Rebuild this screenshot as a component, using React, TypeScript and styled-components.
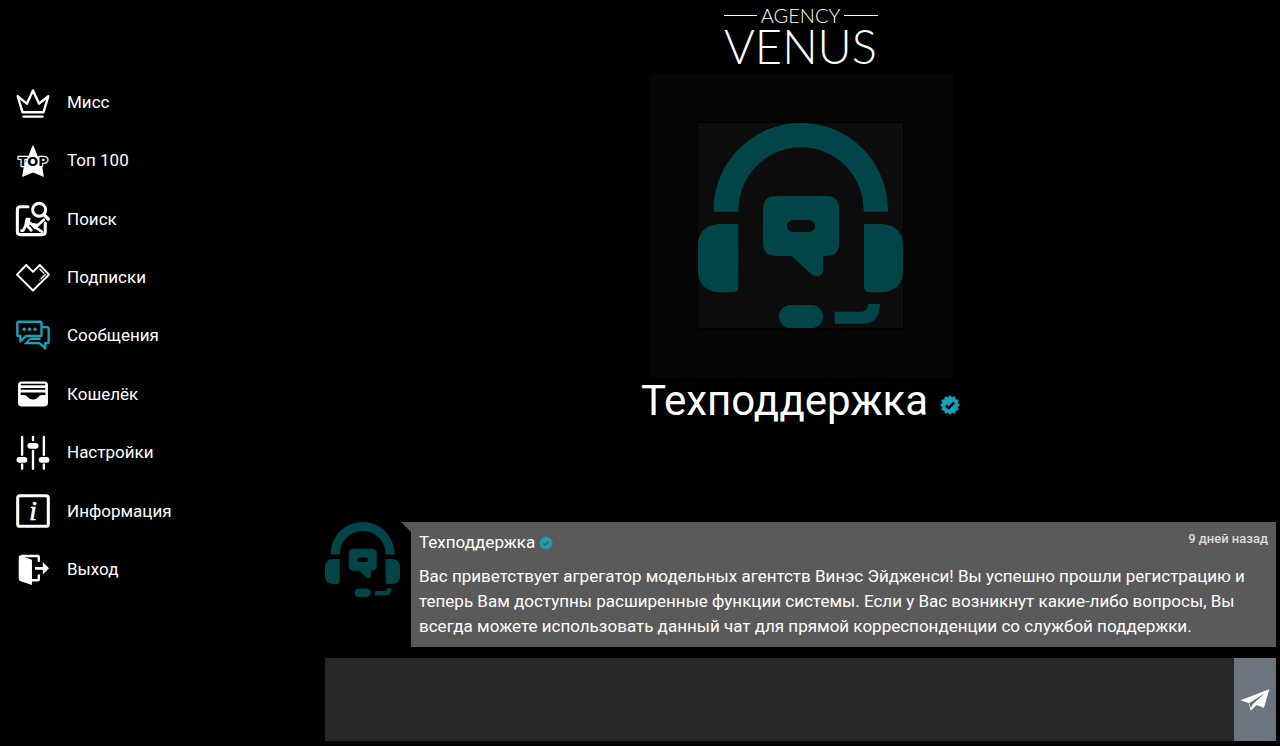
import React from "react";
import styled, { createGlobalStyle } from "styled-components";

const teal = "#17a2b8";
const deepTeal = "#024549";

const GlobalStyle = createGlobalStyle`
  *, *::before, *::after { box-sizing: border-box; }
  body {
    margin: 0;
    background: #000;
    color: #fff;
    font-family: Roboto, "Liberation Sans", sans-serif;
    font-size: 17px;
    line-height: 25px;
  }
`;

const Page = styled.div`
  display: grid;
  grid-template-columns: 1fr 3fr;
  min-height: 100vh;
`;

const Sidebar = styled.nav`
  padding: 73px 16px 0;
`;

const Menu = styled.ul`
  display: grid;
  grid-auto-rows: 1fr;
  min-height: 526px;
  margin: 0;
  padding: 0;
  list-style: none;
`;

const MenuLink = styled.a<{ $active?: boolean }>`
  display: flex;
  align-items: center;
  gap: 17px;
  height: 100%;
  color: #fff;
  text-decoration: none;

  svg {
    flex: none;
    width: 34px;
    height: 34px;
    overflow: visible;
    color: ${(p) => (p.$active ? teal : "#fff")};
  }
`;

const Main = styled.main`
  display: flex;
  flex-direction: column;
  padding: 0 4px 5px 5px;
`;

const Logo = styled.a`
  display: flex;
  flex-direction: column;
  align-self: center;
  align-items: center;
  height: 73px;
  padding-top: 7px;
  color: #fff;
  font-family: Lato, "Liberation Sans", sans-serif;
  font-weight: 300;
  text-decoration: none;
`;

const LogoTop = styled.span`
  display: flex;
  align-items: center;
  gap: 4px;
  width: 154px;
  font-size: 20px;
  line-height: 16px;

  &::before,
  &::after {
    content: "";
    flex: 1;
    height: 1px;
    background: #fff;
  }
`;

const LogoName = styled.span`
  font-size: 47px;
  line-height: 46px;
`;

const Hero = styled.header`
  display: flex;
  flex-direction: column;
  align-items: center;
`;

const Portrait = styled.div`
  display: grid;
  place-items: center;
  width: 304px;
  height: 304px;
  background: #050505;
`;

const PortraitInner = styled.div`
  display: flex;
  border: 1px solid #000;
  background: #0c0c0c;
`;

const Title = styled.h1`
  display: flex;
  align-items: center;
  gap: 12px;
  margin: 0;
  font-size: 42px;
  font-weight: 400;
  line-height: 48px;

  svg { margin-top: 8px; }
`;

const Chat = styled.section`
  display: flex;
  flex-direction: column;
  gap: 11px;
  margin-top: auto;
`;

const Message = styled.article`
  display: flex;
  align-items: flex-start;
`;

const Tail = styled.svg`
  flex: none;
  width: 10px;
  height: 10px;
  margin-left: 1px;
`;

const Bubble = styled.div`
  flex: 1;
  padding: 8px;
  background: #5a5a5a;
`;

const BubbleHead = styled.div`
  display: flex;
  justify-content: space-between;
  margin-bottom: 9px;
`;

const Author = styled.strong`
  display: flex;
  align-items: center;
  gap: 4px;
  font-weight: 400;
`;

const Time = styled.time`
  color: #ddd;
  font-size: 13px;
  font-weight: 500;
  line-height: 18px;
`;

const Text = styled.p`
  margin: 0;
`;

const Composer = styled.form`
  display: flex;
  height: 83px;
`;

const Field = styled.textarea`
  flex: 1;
  padding: 8px;
  border: 0;
  outline: 0;
  background: #282828;
  color: #fff;
  font: inherit;
  resize: none;
`;

const Send = styled.button`
  display: grid;
  place-items: center;
  width: 42px;
  padding: 0;
  border: 0;
  background: #6c757d;
  color: #fff;
`;

const Headset = ({ size }: { size: number }) => (
  <svg width={size} height={size} viewBox="0 0 615 615" fill={deepTeal} aria-hidden="true">
    <path d="M47 266V261C47 117 164 0 309 0S570 117 570 261V266H497V261C497 157 413 73 309 73S122 157 122 261V266Z" />
    <path d="M60 303H121V490Q121 508 103 508H60Q0 500 0 444V367Q0 311 60 303Z" />
    <path d="M498 303H555Q615 311 615 367V444Q615 500 555 508H516Q498 508 498 490Z" />
    <path
      fillRule="evenodd"
      d="M235 219H384Q424 219 424 259V359Q424 399 384 399H376V440C376 458 356 465 342 455L281 399H235Q195 399 195 359V259Q195 219 235 219ZM285 291A18 18 0 0 0 285 327H333A18 18 0 0 0 333 291Z"
    />
    <rect x="243" y="546" width="132" height="69" rx="35" />
    <path d="M410 566H488Q510 566 510 543H546Q546 602 492 602H410Z" />
  </svg>
);

const badgePoints = Array.from({ length: 24 }, (_, i) => {
  const r = i % 2 ? 39 : 49;
  const a = (i * Math.PI) / 12;
  return `${(50 + r * Math.sin(a)).toFixed(1)},${(50 - r * Math.cos(a)).toFixed(1)}`;
}).join(" ");

const Verified = ({ size, check }: { size: number; check: string }) => (
  <svg width={size} height={size} viewBox="0 0 100 100" role="img" aria-label="Подтверждён">
    <polygon points={badgePoints} fill={teal} stroke={teal} strokeWidth="2" strokeLinejoin="round" />
    <path d="M29 52L44 65L70 38" fill="none" stroke={check} strokeWidth="13" />
  </svg>
);

const Icon = ({ children }: { children: React.ReactNode }) => (
  <svg viewBox="0 0 100 100" fill="currentColor" stroke="none" aria-hidden="true">
    {children}
  </svg>
);

const items: { label: string; active?: boolean; icon: React.ReactNode }[] = [
  {
    label: "Мисс",
    icon: (
      <g fill="none" stroke="currentColor" strokeLinejoin="round" strokeLinecap="round">
        <path d="M5 33L32 55L50 16L68 55L95 33L81 80H19Z" strokeWidth="7" />
        <path d="M22 93H78" strokeWidth="7" />
      </g>
    ),
  },
  {
    label: "Топ 100",
    icon: (
      <>
        <path d="M50 2L64 36L76 60L82 97L50 84L18 97L24 60L36 36Z" />
        <text
          x="50"
          y="64"
          textAnchor="middle"
          fontFamily="DejaVu Sans, sans-serif"
          fontWeight="700"
          fontSize="38"
          fill="#000"
          stroke="currentColor"
          strokeWidth="7"
          strokeLinejoin="round"
          paintOrder="stroke"
        >
          TOP
        </text>
      </>
    ),
  },
  {
    label: "Поиск",
    icon: (
      <>
        <path
          d="M35 14H13Q4 14 4 23V87Q4 96 13 96H77Q86 96 86 87V62"
          fill="none"
          stroke="currentColor"
          strokeWidth="9"
          strokeLinecap="round"
        />
        <circle cx="68" cy="23" r="19" fill="none" stroke="currentColor" strokeWidth="9" />
        <path d="M82 37L95 50" stroke="currentColor" strokeWidth="10" strokeLinecap="round" />
        <path
          d="M32 50H39M31 54L28 70L21 84H16M38 56L35 72L45 83M42 62L56 76L82 52M56 74L76 87M48 66L60 67"
          fill="none"
          stroke="currentColor"
          strokeWidth="8"
          strokeLinejoin="round"
          strokeLinecap="round"
        />
      </>
    ),
  },
  {
    label: "Подписки",
    icon: (
      <g fill="none" stroke="currentColor">
        <path d="M30 12L50 32L70 12L97 40L50 87L3 40Z" strokeWidth="6" strokeLinejoin="round" />
        <path d="M69 23L86 40L69 57" strokeWidth="4" strokeDasharray="20 3" />
      </g>
    ),
  },
  {
    label: "Сообщения",
    active: true,
    icon: (
      <>
        <g fill="none" stroke="currentColor" strokeWidth="7" strokeLinejoin="round">
          <path d="M8 8H72Q75 8 75 11V47Q75 50 72 50H29L13 66V50H8Q4 50 4 46V12Q4 8 8 8Z" />
          <path d="M75 24H91Q96 24 96 29V67Q96 71 92 71H86V86L69 71H30" />
        </g>
        <path d="M42 55H72V62H42L31 74H22Z" />
        <circle cx="24" cy="30" r="5" />
        <circle cx="40" cy="30" r="5" />
        <circle cx="56" cy="30" r="5" />
      </>
    ),
  },
  {
    label: "Кошелёк",
    icon: (
      <>
        <rect x="6" y="13" width="88" height="74" rx="11" />
        <path d="M14 22H86M14 35H86M14 48H86" fill="none" stroke="#000" strokeWidth="5" />
        <path d="M14 47H86V53H76C65 53 66 66 50 66S35 53 24 53H14Z" fill="#000" />
      </>
    ),
  },
  {
    label: "Настройки",
    icon: (
      <g fill="none" stroke="currentColor" strokeLinecap="round">
        <path d="M18 3V55M18 84V96M50 3V12M50 44V96M82 3V55M82 84V96" strokeWidth="7" />
        <path d="M10 70H25M42 29H58M75 70H90" strokeWidth="17" />
      </g>
    ),
  },
  {
    label: "Информация",
    icon: (
      <>
        <rect x="5" y="5" width="90" height="90" rx="7" fill="none" stroke="currentColor" strokeWidth="9" />
        <text
          x="50"
          y="75"
          textAnchor="middle"
          fontFamily="Liberation Serif, serif"
          fontStyle="italic"
          fontSize="80"
          stroke="currentColor"
          strokeWidth="2"
        >
          i
        </text>
      </>
    ),
  },
  {
    label: "Выход",
    icon: (
      <>
        <path d="M14 8L45 19Q47 20 47 24V94L12 82Q8 80 8 76V13Q8 6 14 8Z" />
        <path d="M14 9H64Q67 9 67 12V26M47 80H64Q67 80 67 77V63" fill="none" stroke="currentColor" strokeWidth="7" />
        <path d="M56 41H79V27L97 45L79 63V49H56Z" />
      </>
    ),
  },
];

export default function App() {
  return (
    <>
      <GlobalStyle />
      <Page>
        <Sidebar>
          <Menu>
            {items.map((item) => (
              <li key={item.label}>
                <MenuLink href="#" $active={item.active} aria-current={item.active ? "page" : undefined}>
                  <Icon>{item.icon}</Icon>
                  {item.label}
                </MenuLink>
              </li>
            ))}
          </Menu>
        </Sidebar>
        <Main>
          <Logo href="#">
            <LogoTop>AGENCY</LogoTop>
            <LogoName>VENUS</LogoName>
          </Logo>
          <Hero>
            <Portrait>
              <PortraitInner>
                <Headset size={205} />
              </PortraitInner>
            </Portrait>
            <Title>
              Техподдержка
              <Verified size={20} check="#000" />
            </Title>
          </Hero>
          <Chat>
            <Message>
              <Headset size={75} />
              <Tail viewBox="0 0 10 10" aria-hidden="true">
                <path d="M0 0H10V10Z" fill="#5a5a5a" />
              </Tail>
              <Bubble>
                <BubbleHead>
                  <Author>
                    Техподдержка
                    <Verified size={14} check="#5a5a5a" />
                  </Author>
                  <Time>9 дней назад</Time>
                </BubbleHead>
                <Text>
                  Вас приветствует агрегатор модельных агентств Винэс Эйдженси! Вы успешно прошли регистрацию и
                  теперь Вам доступны расширенные функции системы. Если у Вас возникнут какие-либо вопросы, Вы
                  всегда можете использовать данный чат для прямой корреспонденции со службой поддержки.
                </Text>
              </Bubble>
            </Message>
            <Composer onSubmit={(e) => e.preventDefault()}>
              <Field aria-label="Сообщение" />
              <Send type="submit" aria-label="Отправить">
                <svg width="30" height="22" viewBox="0 0 90 66" fill="currentColor" aria-hidden="true">
                  <path d="M1 34L88 1L72 56L50 48L32 65L26 42Z" />
                  <path d="M27 43L75 12L37 47L33 58Z" fill="#6c757d" />
                </svg>
              </Send>
            </Composer>
          </Chat>
        </Main>
      </Page>
    </>
  );
}
